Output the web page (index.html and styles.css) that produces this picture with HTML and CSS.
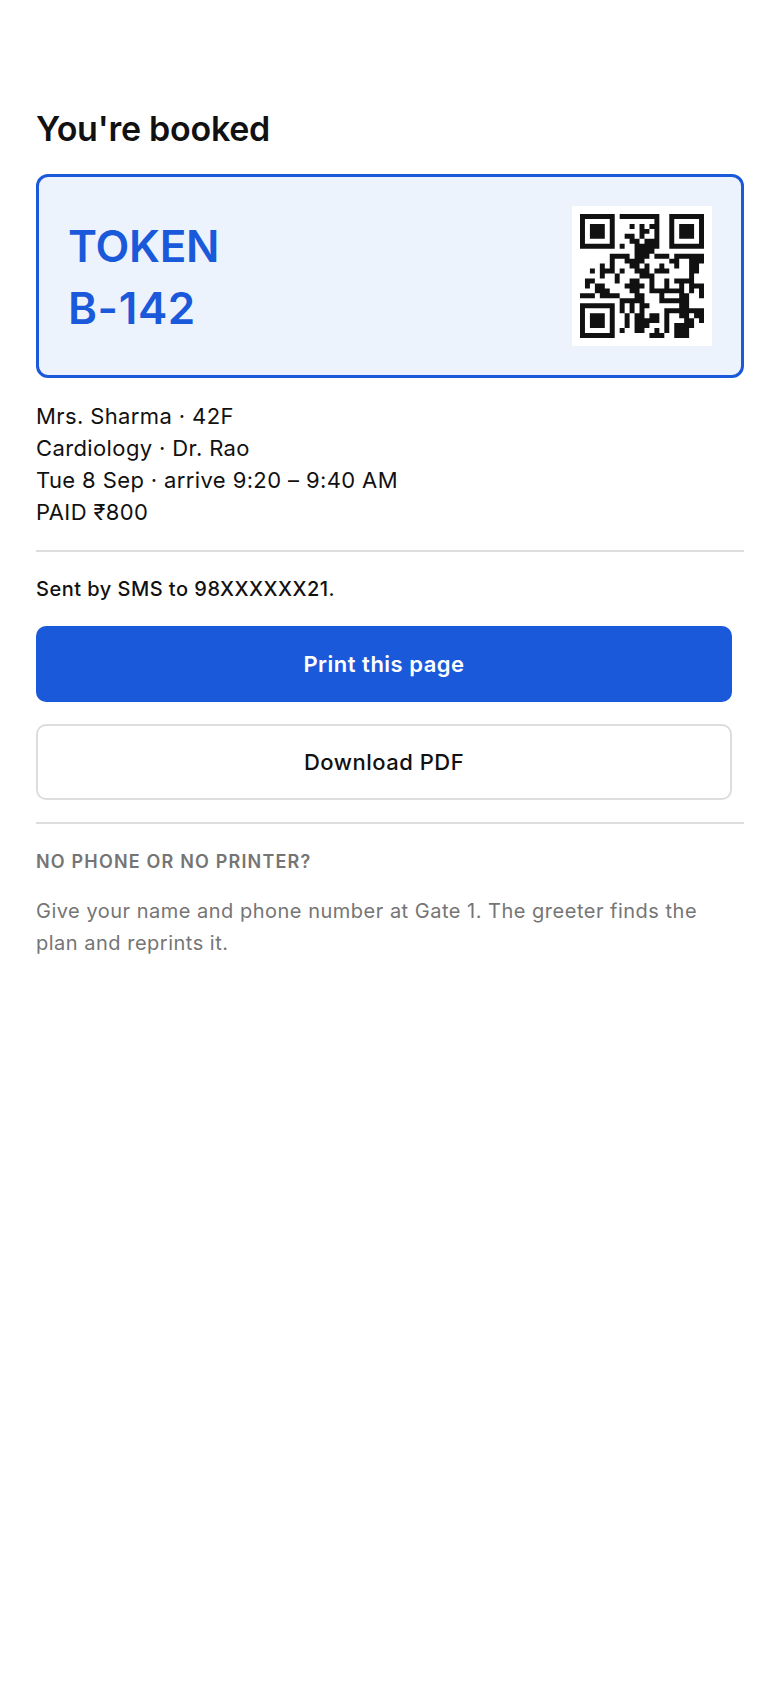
FILE: index.html
```html
<!DOCTYPE html>
<html lang="en">
<head>
    <meta charset="UTF-8">
    <title>You're booked</title>
    <link rel="stylesheet" href="styles.css">
</head>
<body>
<div id="page">
    <h1 class="title">You're booked</h1>
    <div class="token-card">
        <div class="token-text">
            <div class="token-label">TOKEN</div>
            <div class="token-number">B-142</div>
        </div>
        <div class="qr">
            <svg width="124" height="124" viewBox="0 0 25 25" fill="none">
                <path stroke="#111" stroke-width="1" d="
                M0 .5h7M8 .5h8M18 .5h7
                M0 1.5h1M6 1.5h1M15 1.5h1M18 1.5h1M24 1.5h1
                M0 2.5h1M2 2.5h3M6 2.5h1M10 2.5h1M12 2.5h1M14 2.5h2M18 2.5h1M20 2.5h3M24 2.5h1
                M0 3.5h1M2 3.5h3M6 3.5h1M12 3.5h2M15 3.5h1M18 3.5h1M20 3.5h3M24 3.5h1
                M0 4.5h1M2 4.5h3M6 4.5h1M9 4.5h2M12 4.5h1M15 4.5h1M18 4.5h1M20 4.5h3M24 4.5h1
                M0 5.5h1M6 5.5h1M10 5.5h2M13 5.5h3M18 5.5h1M24 5.5h1
                M0 6.5h7M8 6.5h1M11 6.5h5M18 6.5h7
                M11 7.5h4
                M6 8.5h4M11 8.5h3M15 8.5h3M19 8.5h6
                M6 9.5h1M9 9.5h4M18 9.5h2M22 9.5h3
                M4 10.5h1M6 10.5h1M10 10.5h2M13 10.5h1M16 10.5h1M19 10.5h1M22 10.5h2
                M2 11.5h1M4 11.5h3M8 11.5h1M11 11.5h3M15 11.5h3M22 11.5h2
                M4 12.5h1M7 12.5h1M12 12.5h3M22 12.5h1
                M1 13.5h2M7 13.5h1M10 13.5h2M14 13.5h1M17 13.5h1M19 13.5h4
                M1 14.5h1M3 14.5h2M9 14.5h4M14 14.5h1M17 14.5h1M20 14.5h1M22 14.5h3
                M3 15.5h3M10 15.5h2M14 15.5h6M20 15.5h1M22 15.5h1M24 15.5h1
                M0 16.5h3M4 16.5h4M11 16.5h2M16 16.5h1M20 16.5h2M24 16.5h1
                M8 17.5h5M16 17.5h6
                M0 18.5h7M8 18.5h1M10 18.5h1M12 18.5h2M20 18.5h2
                M0 19.5h1M6 19.5h1M8 19.5h1M10 19.5h1M12 19.5h1M17 19.5h8
                M0 20.5h1M2 20.5h3M6 20.5h1M9 20.5h1M11 20.5h2M14 20.5h2M17 20.5h1M20 20.5h2M23 20.5h2
                M0 21.5h1M2 21.5h3M6 21.5h1M9 21.5h1M11 21.5h5M17 21.5h1M21 21.5h2M24 21.5h1
                M0 22.5h1M2 22.5h3M6 22.5h1M9 22.5h1M11 22.5h3M17 22.5h1M19 22.5h4
                M0 23.5h1M6 23.5h1M8 23.5h1M11 23.5h2M15 23.5h1M17 23.5h1M19 23.5h3
                M0 24.5h7M14 24.5h3M19 24.5h3"/>
            </svg>
        </div>
    </div>
    <div class="details">
        <div>Mrs. Sharma · 42F</div>
        <div>Cardiology · Dr. Rao</div>
        <div>Tue 8 Sep · arrive 9:20 – 9:40 AM</div>
        <div>PAID ₹800</div>
    </div>
    <hr class="rule">
    <p class="sent">Sent by SMS to 98XXXXXX21.</p>
    <button class="btn btn-primary">Print this page</button>
    <button class="btn btn-outline">Download PDF</button>
    <hr class="rule">
    <h2 class="help-title">NO PHONE OR NO PRINTER?</h2>
    <p class="help-text">Give your name and phone number at Gate 1. The greeter finds the plan and reprints it.</p>
</div>
</body>
</html>
```

FILE: styles.css
```css
*{
    margin: 0;
    padding: 0;
    box-sizing: border-box;
}
body{
    background-color: #fff;
    color: #111;
    font-family: "Inter", "Noto Sans", sans-serif;
}
#page{
    width: 780px;
    padding: 105px 36px 0;
}
.title{
    font-size: 34px;
    line-height: 48px;
    font-weight: 600;
    letter-spacing: -0.26px;
    color: #111;
}
.token-card{
    display: flex;
    justify-content: space-between;
    align-items: center;
    height: 204px;
    margin-top: 21px;
    padding: 0 29px;
    background-color: #edf3fd;
    border: 3px solid #1b59db;
    border-radius: 12px;
}
.token-text{
    padding-top: 2px;
    font-size: 44px;
    line-height: 62px;
    font-weight: 600;
    color: #1b59db;
}
.token-label{
    letter-spacing: -0.24px;
}
.token-number{
    letter-spacing: 0.6px;
}
.qr{
    display: flex;
    padding: 8px;
    background-color: #fff;
}
.details{
    margin-top: 22px;
    font-size: 22px;
    line-height: 32px;
    letter-spacing: 0.38px;
}
.rule{
    height: 2px;
    margin-top: 22px;
    border: 0;
    background-color: #ddd;
}
.sent{
    margin-top: 22px;
    font-size: 20px;
    line-height: 30px;
    font-weight: 500;
    letter-spacing: 0.48px;
}
.btn{
    display: block;
    width: 696px;
    height: 76px;
    font-family: inherit;
    font-size: 22px;
    letter-spacing: 0.5px;
    border-radius: 10px;
    cursor: pointer;
}
.btn-primary{
    margin-top: 22px;
    background-color: #1b59db;
    border: 0;
    color: #fff;
    font-weight: 600;
}
.btn-outline{
    margin-top: 22px;
    background-color: #fff;
    border: 2px solid #ddd;
    color: #111;
    font-weight: 500;
}
.help-title{
    margin-top: 24px;
    font-size: 18px;
    line-height: 28px;
    font-weight: 600;
    letter-spacing: 1.17px;
    color: #757575;
}
.help-text{
    width: 696px;
    margin-top: 19px;
    font-size: 20px;
    line-height: 32px;
    letter-spacing: 0.5px;
    color: #757575;
}
```
